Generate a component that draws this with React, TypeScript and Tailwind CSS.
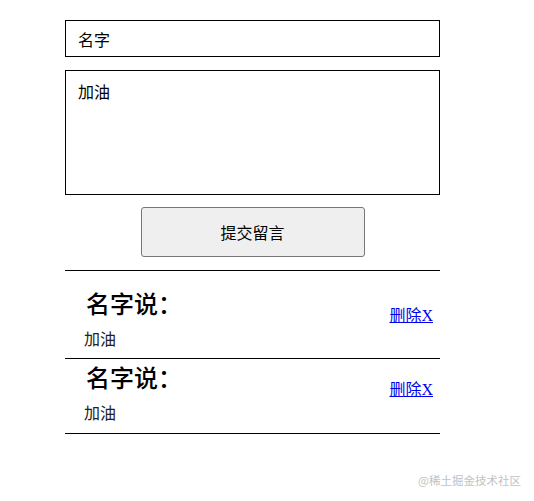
import React from "react";

const sans = "font-['Noto_Sans_CJK_SC',sans-serif]";

function Item({ first }: { first?: boolean }) {
  return (
    <div className={`flex items-start justify-between border-b border-black pl-[21px] pr-[7px] ${first ? "pt-[19px] pb-[6px]" : "pt-[5px] pb-[7px]"}`}>
      <div className="flex flex-col">
        <h3 className="text-[24px] leading-[30px] font-medium text-black font-['Liberation_Serif','Noto_Sans_CJK_SC',serif]">名字说：</h3>
        <p className="mt-[8px] -ml-[2px] text-[16px] leading-[24px] text-[#222] font-['Liberation_Serif','Noto_Sans_CJK_SC',serif]">加油</p>
      </div>
      <a href="#" className="mt-[15px] text-[16px] leading-[22px] text-[#0000ee] underline font-['Liberation_Serif','Noto_Sans_CJK_SC',serif]">删除X</a>
    </div>
  );
}

export default function App() {
  return (
    <div className="relative h-[501px] w-[534px] bg-white">
      <div className="ml-[65px] w-[375px] pt-[20px] flex flex-col">
        <div className={`h-[37px] border border-black flex items-center pl-[12px] text-[16px] text-black ${sans}`}>名字</div>
        <div className={`mt-[13px] h-[125px] border border-black pl-[12px] pt-[8px] text-[16px] leading-[24px] text-black ${sans}`}>加油</div>
        <div className="mt-[12px] flex justify-center">
          <button className={`h-[50px] w-[224px] rounded-[3px] border border-[#767676] bg-[#efefef] text-[16px] text-black ${sans}`}>提交留言</button>
        </div>
        <div className="mt-[13px] border-t border-black">
          <Item first />
          <Item />
        </div>
      </div>
      <div className={`absolute right-[13px] bottom-[13px] text-[11.5px] leading-[16px] text-[#c2c2c2] ${sans}`}>@稀土掘金技术社区</div>
    </div>
  );
}
